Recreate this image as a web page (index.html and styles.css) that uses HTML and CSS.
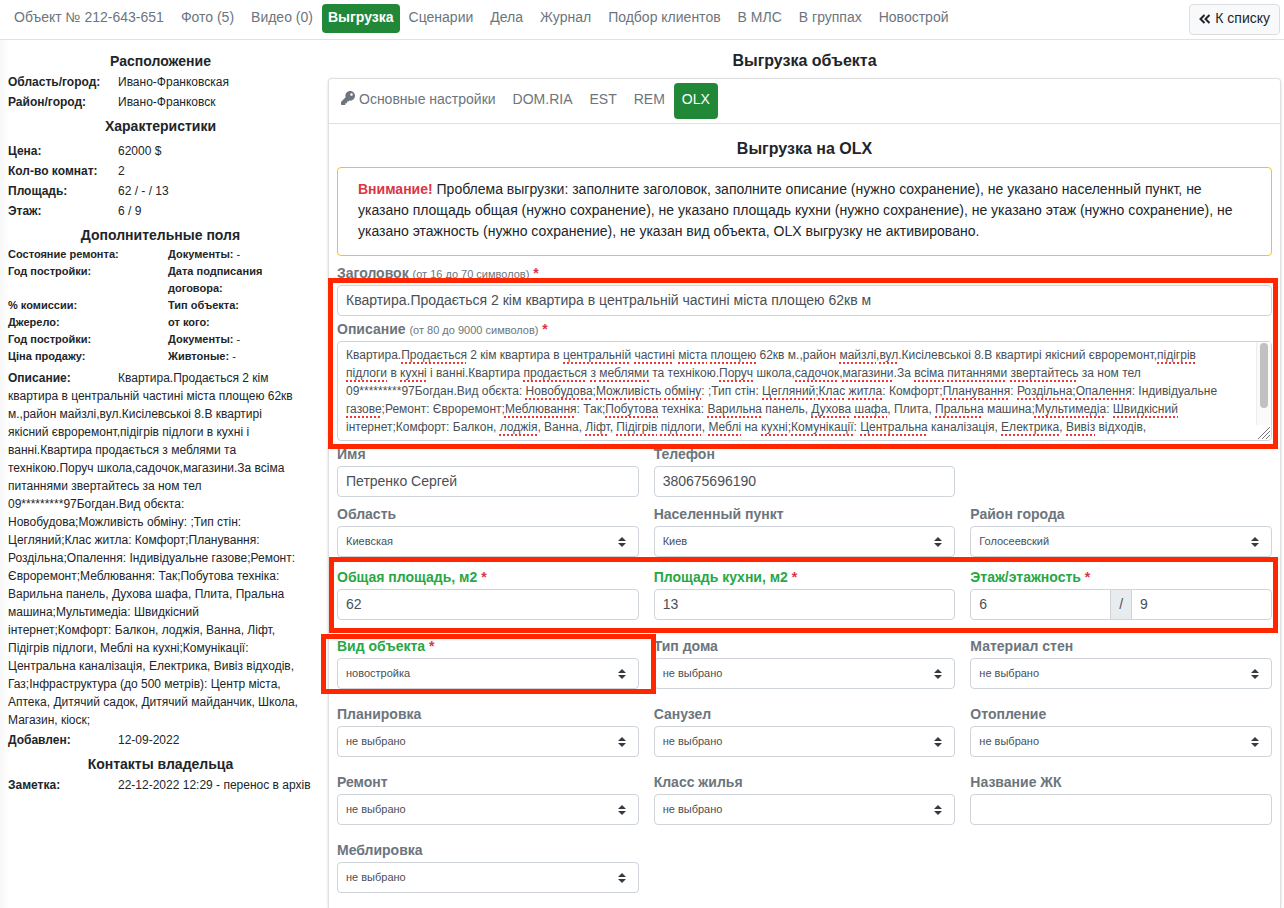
FILE: index.html
```html
<!DOCTYPE html>
<html lang="ru">
<head>
  <meta charset="UTF-8" />
  <meta name="viewport" content="width=device-width, initial-scale=1.0"/>
  <title>Выгрузка объекта</title>
  <link rel="stylesheet" href="styles.css">
</head>
<body>
  <header class="topbar">
    <nav class="nav">
      <a href="#" class="nav-link">Объект № 212-643-651</a>
      <a href="#" class="nav-link">Фото (5)</a>
      <a href="#" class="nav-link">Видео (0)</a>
      <a href="#" class="nav-link active">Выгрузка</a>
      <a href="#" class="nav-link">Сценарии</a>
      <a href="#" class="nav-link">Дела</a>
      <a href="#" class="nav-link">Журнал</a>
      <a href="#" class="nav-link">Подбор клиентов</a>
      <a href="#" class="nav-link">В МЛС</a>
      <a href="#" class="nav-link">В группах</a>
      <a href="#" class="nav-link">Новострой</a>
    </nav>
    <a href="#" class="btn-back">
      <svg class="icon-back" viewBox="0 0 12 10" aria-hidden="true"><path d="M5.500 1L1.500 5l4 4M10.500 1l-4 4 4 4"/></svg>
      К списку
    </a>
  </header>

  <div class="layout">
    <aside class="sidebar">
      <h2 class="side-title">Расположение</h2>
      <dl class="info">
        <dt>Область/город:</dt><dd>Ивано-Франковская</dd>
        <dt>Район/город:</dt><dd>Ивано-Франковск</dd>
      </dl>

      <h2 class="side-title spaced">Характеристики</h2>
      <dl class="info">
        <dt>Цена:</dt><dd>62000 $</dd>
        <dt>Кол-во комнат:</dt><dd>2</dd>
        <dt>Площадь:</dt><dd>62 / - / 13</dd>
        <dt>Этаж:</dt><dd>6 / 9</dd>
      </dl>

      <h2 class="side-title">Дополнительные поля</h2>
      <div class="extra">
        <div><b>Состояние ремонта:</b></div><div><b>Документы:</b> -</div>
        <div><b>Год постройки:</b></div><div><b>Дата подписания договора:</b></div>
        <div><b>% комиссии:</b></div><div><b>Тип объекта:</b></div>
        <div><b>Джерело:</b></div><div><b>от кого:</b></div>
        <div><b>Год постройки:</b></div><div><b>Документы:</b> -</div>
        <div><b>Ціна продажу:</b></div><div><b>Живтоные:</b> -</div>
      </div>

      <p class="description"><b class="description-label">Описание:</b>Квартира.Продається 2 кім<br>
        квартира в центральній частині міста площею 62кв<br>
        м.,район майзлі,вул.Кисілевськоі 8.В квартирі<br>
        якісний євроремонт,підігрів підлоги в кухні і<br>
        ванні.Квартира продається з меблями та<br>
        технікою.Поруч школа,садочок,магазини.За всіма<br>
        питаннями звертайтесь за ном тел<br>
        09*********97Богдан.Вид обєкта:<br>
        Новобудова;Можливість обміну: ;Тип стін:<br>
        Цегляний;Клас житла: Комфорт;Планування:<br>
        Роздільна;Опалення: Індивідуальне газове;Ремонт:<br>
        Євроремонт;Меблювання: Так;Побутова техніка:<br>
        Варильна панель, Духова шафа, Плита, Пральна<br>
        машина;Мультимедіа: Швидкісний<br>
        інтернет;Комфорт: Балкон, лоджія, Ванна, Ліфт,<br>
        Підігрів підлоги, Меблі на кухні;Комунікації:<br>
        Центральна каналізація, Електрика, Вивіз відходів,<br>
        Газ;Інфраструктура (до 500 метрів): Центр міста,<br>
        Аптека, Дитячий садок, Дитячий майданчик, Школа,<br>
        Магазин, кіоск;</p>
      <dl class="info">
        <dt>Добавлен:</dt><dd>12-09-2022</dd>
      </dl>

      <h2 class="side-title">Контакты владельца</h2>
      <dl class="info">
        <dt>Заметка:</dt><dd>22-12-2022 12:29 - перенос в архів</dd>
      </dl>
    </aside>

    <main class="main">
      <h1 class="page-title">Выгрузка объекта</h1>

      <div class="card">
        <nav class="card-tabs">
          <a href="#" class="tab">
            <svg class="icon-key" viewBox="0 0 512 512" aria-hidden="true"><path d="M512 176c0 97.200-78.800 176-176 176-11.200 0-22.200-1.100-32.800-3.100l-24 27A24 24 0 0 1 261.200 384H224v40c0 13.300-10.700 24-24 24h-40v40c0 13.300-10.700 24-24 24H24c-13.300 0-24-10.700-24-24v-78.100c0-6.400 2.500-12.500 7-17l161.800-161.800C162.900 213.800 160 195.200 160 176 160 78.800 238.800 0 336 0s176 78.500 176 176zM336 128c0 26.500 21.500 48 48 48s48-21.500 48-48-21.500-48-48-48-48 21.500-48 48z"/></svg>
            Основные настройки
          </a>
          <a href="#" class="tab">DOM.RIA</a>
          <a href="#" class="tab">EST</a>
          <a href="#" class="tab">REM</a>
          <a href="#" class="tab active">OLX</a>
        </nav>

        <form class="card-body">
          <h2 class="form-title">Выгрузка на OLX</h2>

          <div class="alert">
            <b class="danger">Внимание!</b> Проблема выгрузки: заполните заголовок, заполните описание (нужно сохранение), не указано населенный пункт, не указано площадь общая (нужно сохранение), не указано площадь кухни (нужно сохранение), не указано этаж (нужно сохранение), не указано этажность (нужно сохранение), не указан вид объекта, OLX выгрузку не активировано.
          </div>

          <div class="texts marked">
            <div class="field">
              <label for="title">Заголовок <small>(от 16 до 70 символов)</small> <span class="danger">*</span></label>
              <input type="text" id="title" class="control" value="Квартира.Продається 2 кім квартира в центральній частині міста площею 62кв м">
            </div>
            <div class="field">
              <label for="description">Описание <small>(от 80 до 9000 символов)</small> <span class="danger">*</span></label>
              <div class="editor">
                <div class="spelling" id="spelling" aria-hidden="true"></div>
                <textarea id="description" class="control" spellcheck="false">Квартира.Продається 2 кім квартира в центральній частині міста площею 62кв м.,район майзлі,вул.Кисілевськоі 8.В квартирі якісний євроремонт,підігрів
підлоги в кухні і ванні.Квартира продається з меблями та технікою.Поруч школа,садочок,магазини.За всіма питаннями звертайтесь за ном тел
09*********97Богдан.Вид обєкта: Новобудова;Можливість обміну: ;Тип стін: Цегляний;Клас житла: Комфорт;Планування: Роздільна;Опалення: Індивідуальне
газове;Ремонт: Євроремонт;Меблювання: Так;Побутова техніка: Варильна панель, Духова шафа, Плита, Пральна машина;Мультимедіа: Швидкісний
інтернет;Комфорт: Балкон, лоджія, Ванна, Ліфт, Підігрів підлоги, Меблі на кухні;Комунікації: Центральна каналізація, Електрика, Вивіз відходів,</textarea>
                <span class="scroll-track"><span class="scroll-thumb"></span></span>
                <svg class="icon-grip" viewBox="0 0 14 14" aria-hidden="true"><path d="M1 13L13 1M5 13l8-8M9 13l4-4"/></svg>
              </div>
            </div>
          </div>

          <div class="row contact">
            <div class="field">
              <label for="name">Имя</label>
              <input type="text" id="name" class="control" value="Петренко Сергей">
            </div>
            <div class="field">
              <label for="phone">Телефон</label>
              <input type="tel" id="phone" class="control" value="380675696190">
            </div>
          </div>

          <div class="row place">
            <div class="field">
              <label for="region">Область</label>
              <select id="region" class="control"><option>Киевская</option></select>
            </div>
            <div class="field">
              <label for="city">Населенный пункт</label>
              <select id="city" class="control"><option>Киев</option></select>
            </div>
            <div class="field">
              <label for="district">Район города</label>
              <select id="district" class="control"><option>Голосеевский</option></select>
            </div>
          </div>

          <div class="row areas marked">
            <div class="field required">
              <label for="area">Общая площадь, м2 <span class="danger">*</span></label>
              <input type="text" id="area" class="control" value="62">
            </div>
            <div class="field required">
              <label for="kitchen">Площадь кухни, м2 <span class="danger">*</span></label>
              <input type="text" id="kitchen" class="control" value="13">
            </div>
            <div class="field required">
              <label for="floor">Этаж/этажность <span class="danger">*</span></label>
              <div class="input-group">
                <input type="text" id="floor" class="control" value="6">
                <span class="input-group-text">/</span>
                <input type="text" class="control" value="9" aria-label="Этажность">
              </div>
            </div>
          </div>

          <div class="row">
            <div class="field required kind marked">
              <label for="kind">Вид объекта <span class="danger">*</span></label>
              <select id="kind" class="control"><option>новостройка</option></select>
            </div>
            <div class="field">
              <label for="house">Тип дома</label>
              <select id="house" class="control"><option>не выбрано</option></select>
            </div>
            <div class="field">
              <label for="walls">Материал стен</label>
              <select id="walls" class="control"><option>не выбрано</option></select>
            </div>
          </div>

          <div class="row">
            <div class="field">
              <label for="plan">Планировка</label>
              <select id="plan" class="control"><option>не выбрано</option></select>
            </div>
            <div class="field">
              <label for="bathroom">Санузел</label>
              <select id="bathroom" class="control"><option>не выбрано</option></select>
            </div>
            <div class="field">
              <label for="heating">Отопление</label>
              <select id="heating" class="control"><option>не выбрано</option></select>
            </div>
          </div>

          <div class="row">
            <div class="field">
              <label for="repair">Ремонт</label>
              <select id="repair" class="control"><option>не выбрано</option></select>
            </div>
            <div class="field">
              <label for="class">Класс жилья</label>
              <select id="class" class="control"><option>не выбрано</option></select>
            </div>
            <div class="field">
              <label for="complex">Название ЖК</label>
              <input type="text" id="complex" class="control">
            </div>
          </div>

          <div class="row">
            <div class="field">
              <label for="furniture">Меблировка</label>
              <select id="furniture" class="control"><option>не выбрано</option></select>
            </div>
          </div>
        </form>
      </div>
    </main>
  </div>

  <script src="script.js"></script>
</body>
</html>
```
FILE: styles.css
```css
:root {
  --green: #218838;
  --label-green: #28a745;
  --red: #dc3545;
  --mark: #ff2600;
  --muted: #6c757d;
  --dark: #212529;
  --field: #495057;
  --border: #ced4da;
}

* {
  box-sizing: border-box;
}

body {
  font-family: "Liberation Sans", Arial, sans-serif;
  font-size: 14px;
  line-height: 21px;
  color: var(--dark);
  background: #fff;
  margin: 0;
  min-height: 100vh;
  display: flex;
  flex-direction: column;
}

h1, h2, p, dl, dd {
  margin: 0;
}

a {
  text-decoration: none;
}

/* top navigation */
.topbar {
  display: flex;
  justify-content: space-between;
  align-items: flex-start;
  padding: 4px 4px 4px 6px;
  border-bottom: 1px solid #dee2e6;
}

.nav {
  display: flex;
  gap: 1px;
}

.nav-link {
  color: var(--muted);
  padding: 3px 8px 5px;
  border-radius: 4px;
  white-space: nowrap;
}

.nav-link.active {
  background: var(--green);
  color: #fff;
  font-weight: bold;
  padding-left: 6px;
  padding-right: 6px;
}

.btn-back {
  display: flex;
  align-items: center;
  gap: 4px;
  color: var(--dark);
  background: #f8f9fa;
  border: 1px solid #ddd;
  border-radius: 4px;
  padding: 3px 9px 5px;
  white-space: nowrap;
}

.icon-back {
  width: 12px;
  height: 10px;
  fill: none;
  stroke: var(--dark);
  stroke-width: 2;
}

.layout {
  display: flex;
  flex: 1;
}

/* left column */
.sidebar {
  width: 25%;
  flex: none;
  padding: 10px 8px;
  font-size: 12px;
  line-height: 18px;
  background: linear-gradient(to right, #f8f8f8, #fff 10px);
}

.side-title {
  font-size: 14px;
  line-height: 22px;
  text-align: center;
}

.info {
  display: grid;
  grid-template-columns: 110px 1fr;
  line-height: 20px;
}

.info dt {
  font-weight: bold;
}

.info + .side-title {
  margin-top: 3px;
}

.side-title.spaced {
  margin-bottom: 4px;
}

.extra {
  display: grid;
  grid-template-columns: 160px 1fr;
  font-size: 11px;
  line-height: 17px;
  margin-bottom: 4px;
}

.description {
  margin-bottom: 1px;
}

.description-label {
  display: inline-block;
  width: 110px;
}

/* right column */
.main {
  flex: 1;
  min-width: 0;
  display: flex;
  flex-direction: column;
  padding: 10px 3px 0 7px;
}

.page-title,
.form-title {
  font-size: 16px;
  line-height: 22px;
  text-align: center;
}

.card {
  flex: 1;
  margin-top: 6px;
  border: 1px solid #dfdfdf;
  border-bottom: none;
  border-radius: 4px 4px 0 0;
  box-shadow: 0 1px 3px rgba(0, 0, 0, 0.15);
}

.card-tabs {
  display: flex;
  gap: 1px;
  padding: 4px;
  border-bottom: 1px solid #dfdfdf;
}

.tab {
  display: flex;
  color: var(--muted);
  padding: 6px 8px 9px;
  border-radius: 4px;
}

.tab.active {
  background: var(--green);
  color: #fff;
}

.icon-key {
  width: 14px;
  height: 14px;
  margin: 2px 4px 0 0;
  fill: var(--muted);
}

.card-body {
  padding: 14px 8px 0;
}

.alert {
  margin: 7px 0;
  padding: 11px 20px 13px;
  border: 1px solid #ffc107;
  border-radius: 4px;
}

.danger {
  color: var(--red);
}

/* form */
.row {
  display: grid;
  grid-template-columns: repeat(3, 1fr);
  gap: 15px;
  margin-bottom: 15px;
}

.contact {
  margin-bottom: 7px;
}

.place {
  margin-bottom: 10px;
}

.areas {
  margin-bottom: 16px;
}

.texts .field {
  margin-bottom: 3px;
}

.field label {
  display: block;
  margin-bottom: 1px;
  color: var(--muted);
  font-weight: bold;
}

.field label small {
  font-size: 11px;
  font-weight: normal;
  line-height: 1;
}

.field.required label {
  color: var(--label-green);
}

.field label .danger {
  color: var(--red);
}

.control {
  display: block;
  width: 100%;
  height: 31px;
  padding: 4px 8px 6px;
  border: 1px solid var(--border);
  border-radius: 4px;
  background: #fff;
  color: var(--field);
  font-family: inherit;
  font-size: 14px;
}

select.control {
  appearance: none;
  padding: 0 24px 1px 8px;
  font-size: 11px;
  background: #fff url("data:image/svg+xml,%3Csvg xmlns='http://www.w3.org/2000/svg' viewBox='0 0 4 5'%3E%3Cpath fill='%23343a40' d='M2 0L0 2h4zm0 5L0 3h4z'/%3E%3C/svg%3E") no-repeat right 12px center / 8px 10px;
}

.editor {
  position: relative;
}

textarea.control,
.spelling {
  height: 100px;
  padding: 4px 24px 4px 8px;
  font-size: 12px;
  line-height: 18px;
  overflow: hidden;
}

textarea.control {
  resize: none;
}

/* spelling marks lie over the textarea and repeat its text flow */
.spelling {
  position: absolute;
  inset: 0;
  border: 1px solid transparent;
  color: transparent;
  white-space: pre-wrap;
  overflow-wrap: break-word;
  pointer-events: none;
}

.spelling u {
  text-decoration: underline dotted #f23535 2px;
  text-underline-offset: 3px;
  text-decoration-skip-ink: none;
}

.scroll-track {
  position: absolute;
  top: 1px;
  right: 1px;
  width: 15px;
  height: 83px;
  background: #fafafa;
  border-left: 1px solid #ededed;
}

.scroll-thumb {
  display: block;
  width: 8px;
  height: 65px;
  margin: 1px 0 0 3px;
  border-radius: 4px;
  background: #c1c1c1;
}

.icon-grip {
  position: absolute;
  right: 1px;
  bottom: 1px;
  width: 14px;
  height: 14px;
  stroke: #777;
}

.input-group {
  display: flex;
}

.input-group .control {
  flex: 1;
  min-width: 0;
}

.input-group .control:first-child {
  border-radius: 4px 0 0 4px;
}

.input-group .control:last-child {
  border-radius: 0 4px 4px 0;
}

.input-group-text {
  padding: 4px 8px;
  border: solid var(--border);
  border-width: 1px 0;
  background: #e9ecef;
  color: var(--field);
}

/* red frames round the fields to be filled in */
.marked {
  position: relative;
}

.marked::after {
  content: "";
  position: absolute;
  border: 5px solid var(--mark);
  pointer-events: none;
}

.texts::after {
  inset: 15px -6px -8px -9px;
}

.areas::after {
  inset: -10px -6px -13px -8px;
}

.kind::after {
  inset: -2px -17px -5px -16px;
}
```
FILE: script.js
```js
// words that the dictionary does not know
const unknown = [
  "центральній", "частині", "міста", "площею", "майзлі", "вул", "підігрів",
  "підлоги", "кухні", "з", "меблями", "Поруч", "садочок", "магазини", "всіма",
  "питаннями", "звертайтесь", "Новобудова", "Можливість", "обміну", "Цегляний",
  "Клас", "житла", "Планування", "Роздільна", "Опалення", "газове",
  "Меблювання", "Побутова", "Варильна", "Духова", "шафа", "Пральна",
  "Мультимедіа", "Швидкісний", "лоджія", "Ліфт", "Підігрів", "Меблі",
  "Комунікації", "Центральна", "Електрика", "Вивіз", "Продається", "продається"
];

const description = document.getElementById("description");
const spelling = document.getElementById("spelling");

function markSpelling() {
  spelling.textContent = "";
  description.value.split(/([\p{L}]+)/u).forEach(part => {
    if (unknown.includes(part)) {
      const mark = document.createElement("u");
      mark.textContent = part;
      spelling.append(mark);
    } else {
      spelling.append(part);
    }
  });
}

description.addEventListener("input", markSpelling);
markSpelling();
```
